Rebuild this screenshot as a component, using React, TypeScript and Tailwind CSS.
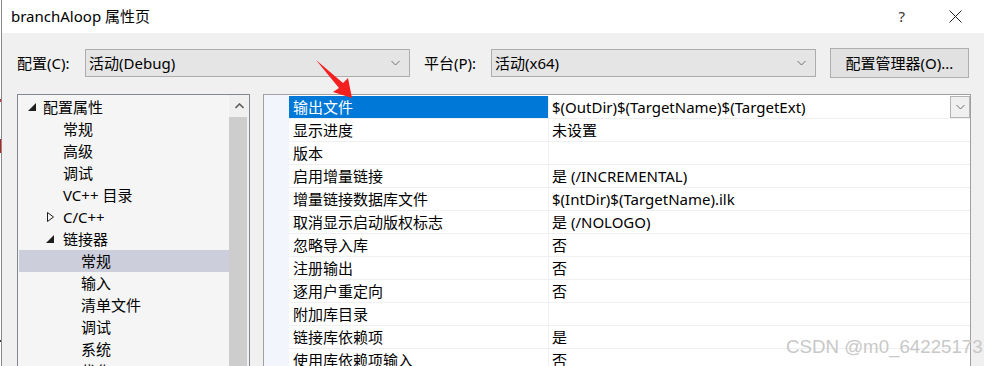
import React from "react";

const font = "font-['Noto_Sans','Noto_Sans_CJK_SC',sans-serif]";

function Chevron({ className = "" }: { className?: string }) {
  return (
    <svg width="9" height="6" viewBox="0 0 9 6" className={className}>
      <polyline points="0.5,1 4.5,5 8.5,1" fill="none" stroke="#707070" strokeWidth="1" />
    </svg>
  );
}

function Combo({ text }: { text: string }) {
  return (
    <div className="w-[325px] h-[28px] border border-[#adadad] bg-[#e5e5e5] flex items-center justify-between pl-[3px] pr-[9px]">
      <span className="text-[15px] text-black leading-none">{text}</span>
      <Chevron />
    </div>
  );
}

type TreeItem = { label: string; level: 0 | 1 | 2; icon?: "open" | "closed"; selected?: boolean };

const tree: TreeItem[] = [
  { label: "配置属性", level: 0, icon: "open" },
  { label: "常规", level: 1 },
  { label: "高级", level: 1 },
  { label: "调试", level: 1 },
  { label: "VC++ 目录", level: 1 },
  { label: "C/C++", level: 1, icon: "closed" },
  { label: "链接器", level: 1, icon: "open" },
  { label: "常规", level: 2, selected: true },
  { label: "输入", level: 2 },
  { label: "清单文件", level: 2 },
  { label: "调试", level: 2 },
  { label: "系统", level: 2 },
  { label: "优化", level: 2 },
];

function TreeIcon({ kind }: { kind?: "open" | "closed" }) {
  if (kind === "open")
    return (
      <svg width="8" height="8" viewBox="0 0 8 8">
        <polygon points="0,8 8,8 8,0" fill="#1e1e1e" />
      </svg>
    );
  if (kind === "closed")
    return (
      <svg width="7" height="10" viewBox="0 0 7 10">
        <polygon points="0.5,0.5 6.5,5 0.5,9.5" fill="none" stroke="#1e1e1e" strokeWidth="1" />
      </svg>
    );
  return null;
}

function TreeRow({ item }: { item: TreeItem }) {
  const spacer =
    item.level === 0 ? "w-[24px] pr-[7px]" : item.level === 1 ? "w-[44px] pr-[9px]" : "w-[62px] pr-[9px]";
  return (
    <div className={`h-[22px] ml-[1px] flex items-center ${item.selected ? "bg-[#cccedb]" : ""}`}>
      <div className={`${spacer} flex justify-end items-center shrink-0`}>
        <TreeIcon kind={item.icon} />
      </div>
      <span className="text-[15px] leading-none text-black whitespace-nowrap">{item.label}</span>
    </div>
  );
}

const rows: [string, string][] = [
  ["输出文件", "$(OutDir)$(TargetName)$(TargetExt)"],
  ["显示进度", "未设置"],
  ["版本", ""],
  ["启用增量链接", "是 (/INCREMENTAL)"],
  ["增量链接数据库文件", "$(IntDir)$(TargetName).ilk"],
  ["取消显示启动版权标志", "是 (/NOLOGO)"],
  ["忽略导入库", "否"],
  ["注册输出", "否"],
  ["逐用户重定向", "否"],
  ["附加库目录", ""],
  ["链接库依赖项", "是"],
  ["使用库依赖项输入", "否"],
];

export default function App() {
  return (
    <div className={`relative w-[984px] h-[366px] overflow-hidden bg-white flex ${font}`}>
      {/* background window sliver */}
      <div className="relative w-[1px] h-full bg-white shrink-0">
        <div className="absolute left-0 top-[99px] w-[1px] h-[3px] bg-[#d03030]" />
        <div className="absolute left-0 top-[139px] w-[1px] h-[14px] bg-[#c02020]" />
        <div className="absolute left-0 top-[340px] w-[1px] h-[2px] bg-[#404040]" />
      </div>
      <div className="flex-1 flex flex-col border-l border-[#8a8a8a] min-w-0">
        {/* title bar */}
        <div className="h-[33px] bg-white flex items-center shrink-0">
          <span className="ml-[9px] text-[15px] text-black leading-none">branchAloop 属性页</span>
          <div className="flex-1" />
          <span className="text-[15px] text-[#333] leading-none mr-[44px]">?</span>
          <svg width="13" height="13" viewBox="0 0 13 13" className="mr-[22px]">
            <line x1="0.5" y1="0.5" x2="12.5" y2="12.5" stroke="#222" strokeWidth="1" />
            <line x1="12.5" y1="0.5" x2="0.5" y2="12.5" stroke="#222" strokeWidth="1" />
          </svg>
        </div>
        {/* body */}
        <div className="flex-1 bg-[#f0f0f0] flex flex-col pt-[15px] min-h-0">
          <div className="h-[30px] flex items-center shrink-0">
            <span className="ml-[15px] w-[68px] text-[15px] text-black leading-none">配置(C):</span>
            <Combo text="活动(Debug)" />
            <span className="ml-[14px] w-[67px] text-[15px] text-black leading-none">平台(P):</span>
            <Combo text="活动(x64)" />
            <div className="ml-[14px] w-[139px] h-[30px] border border-[#adadad] bg-[#e1e1e1] flex items-center justify-center">
              <span className="text-[15px] text-black leading-none">配置管理器(O)...</span>
            </div>
          </div>
          <div className="flex mt-[16px] flex-1 min-h-0">
            {/* tree */}
            <div className="ml-[15px] w-[233px] h-[300px] border border-[#828790] bg-[#f5f5f5] flex shrink-0">
              <div className="flex-1 pt-[1px] min-w-0">
                {tree.map((t, i) => (
                  <TreeRow key={i} item={t} />
                ))}
              </div>
              <div className="w-[20px] flex flex-col bg-[#f0f0f0] shrink-0">
                <div className="h-[22px] flex items-center justify-center">
                  <svg width="9" height="6" viewBox="0 0 9 6">
                    <polyline points="0.5,5 4.5,1 8.5,5" fill="none" stroke="#606060" strokeWidth="1.6" />
                  </svg>
                </div>
                <div className="flex-1 bg-[#cdcdcd] mr-[2px]" />
              </div>
            </div>
            {/* property grid */}
            <div className="ml-[13px] w-[708px] h-[300px] border border-[#a0a0a0] bg-white flex shrink-0">
              <div className="w-[25px] bg-[#f2f5fb] shrink-0" />
              <div className="flex-1 pt-[1px] min-w-0">
                {rows.map(([k, v], i) => (
                  <div key={i} className="h-[23px] flex border-b border-[#eef0f3]">
                    <div
                      className={`w-[259px] shrink-0 flex items-center pl-[4px] ${
                        i === 0 ? "bg-[#0078d7] text-white" : "text-black"
                      }`}
                    >
                      <span className="text-[15px] leading-none whitespace-nowrap">{k}</span>
                    </div>
                    <div className="w-[1px] bg-[#eef0f3] shrink-0" />
                    <div className="flex-1 flex items-center pl-[3px] min-w-0">
                      <span className="text-[15px] leading-none text-black whitespace-nowrap">{v}</span>
                      {i === 0 && (
                        <>
                          <div className="flex-1" />
                          <div className="w-[20px] h-[22px] -mt-[1px] border border-[#b4b4b4] bg-[#f0f0f0] flex items-center justify-center">
                            <Chevron />
                          </div>
                        </>
                      )}
                    </div>
                  </div>
                ))}
              </div>
            </div>
          </div>
        </div>
      </div>
      {/* red arrow annotation */}
      <svg className="absolute left-0 top-0 pointer-events-none" width="984" height="366">
        <polygon points="316,60 343,83 348,78 352,98 333,92 339,88" fill="#f42020" />
      </svg>
      {/* watermark */}
      <span className="absolute left-[786px] top-[338px] text-[18.7px] leading-none text-[#c8c8c8] font-['Liberation_Sans',sans-serif] whitespace-nowrap">
        CSDN @m0_64225173
      </span>
    </div>
  );
}
